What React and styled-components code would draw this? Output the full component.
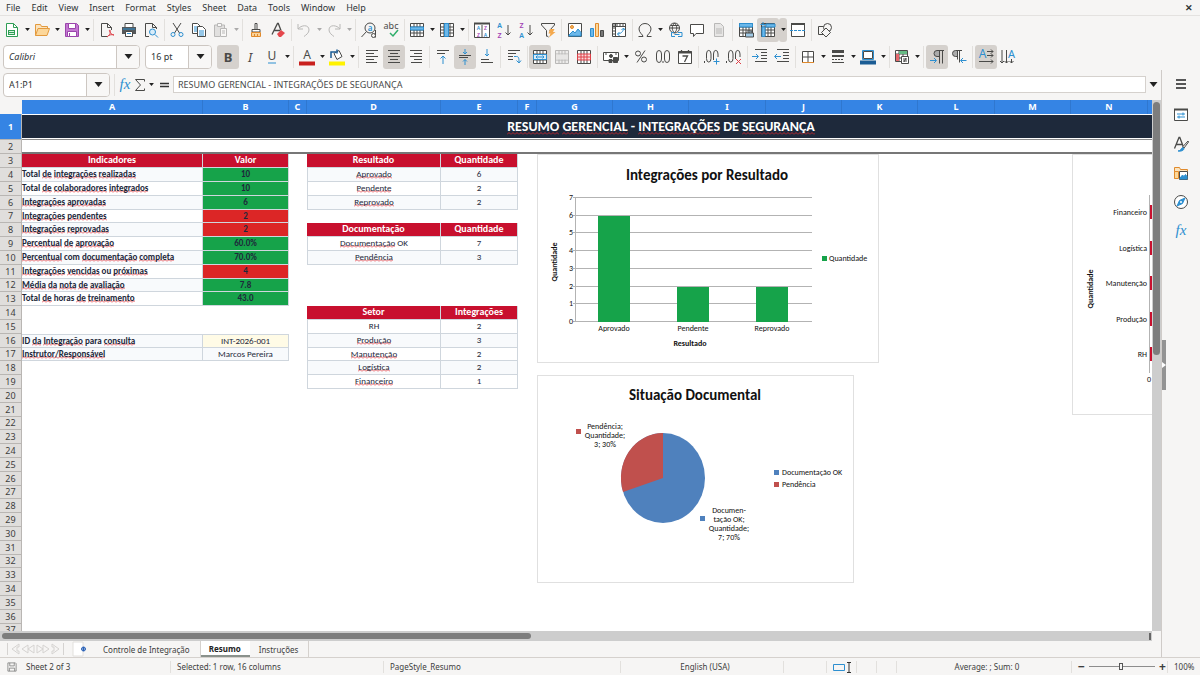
import React from "react";
import styled, { createGlobalStyle, css } from "styled-components";

const ui = `"Noto Sans", "Open Sans", sans-serif`;
const cellFont = `Carlito, Lato, sans-serif`;

const GlobalStyle = createGlobalStyle`
  * {
    box-sizing: border-box;
  }

  body {
    margin: 0;
    background: #f6f5f4;
    color: #2e3436;
    font-family: ${ui};
    font-size: 9px;
    overflow: hidden;
  }

  button,
  input {
    font: inherit;
    color: inherit;
    border: 0;
    padding: 0;
    margin: 0;
    background: none;
    outline: none;
  }

  svg {
    display: block;
    flex: none;
    overflow: visible;
  }
`;

const Window = styled.div`
  height: 100vh;
  display: flex;
  flex-direction: column;
`;

const MenuBar = styled.nav`
  display: flex;
  align-items: center;
  height: 16px;
  padding-left: 6px;
  gap: 11px;
  border-bottom: 1px solid #e4e2e0;
`;

const MenuItem = styled.button`
  line-height: 15px;
`;

const CloseButton = styled.button`
  margin: 0 7px 0 auto;
  font-size: 9px;
  font-weight: 700;
`;

const Toolbar = styled.div`
  display: flex;
  align-items: center;
  height: 27px;
  padding-left: ${(p) => p.$indent || 1}px;
`;

const ToolButton = styled.button`
  display: flex;
  align-items: center;
  justify-content: center;
  width: 22px;
  height: 24px;
  border-radius: 3px;
  background: ${(p) => (p.$on ? "#d5d1cd" : "none")};
  opacity: ${(p) => (p.$off ? 0.35 : 1)};
`;

const ArrowButton = styled(ToolButton)`
  width: 8px;
`;

const Sep = styled.span`
  width: 1px;
  height: 22px;
  margin: 0 2px;
  margin-right: ${(p) => (p.$narrow ? 1 : 2)}px;
  background: #e2e0dd;
`;

const Combo = styled.div`
  display: flex;
  height: 24px;
  width: ${(p) => p.$width}px;
  margin-right: ${(p) => (p.$tight ? 2 : 5)}px;
  border: 1px solid #cdc7c2;
  border-radius: 4px;
  background: #fff;

  input {
    flex: 1;
    min-width: 0;
    padding-left: 5px;
    font-style: ${(p) => (p.$italic ? "italic" : "normal")};
  }

  button {
    display: flex;
    align-items: center;
    justify-content: center;
    width: 23px;
    border-left: 1px solid #cdc7c2;
    border-radius: 0 3px 3px 0;
    background: #f8f7f6;
  }
`;

const Main = styled.div`
  flex: 1;
  display: flex;
  min-height: 0;
`;

const Document = styled.main`
  flex: 1;
  min-width: 0;
  display: flex;
  flex-direction: column;
  border-right: 1px solid #cfcbc8;
`;

const FormulaBar = styled.div`
  display: flex;
  align-items: center;
  height: 29px;
  margin-bottom: 1px;
  padding: 0 4px 0 3px;
`;

const FormulaButton = styled.button`
  display: flex;
  align-items: center;
  justify-content: center;
  width: ${(p) => p.$width || 15}px;
`;

const FormulaInput = styled.input`
  flex: 1;
  min-width: 0;
  height: 17px;
  margin: 0 3px 0 0;
  padding-left: 4px;
  border: 1px solid #d5d1cd;
  background: #fff;
  color: #4a4a4a;
`;

const SheetRow = styled.div`
  flex: 1;
  display: flex;
  min-height: 0;
`;

const Sheet = styled.div`
  position: relative;
  flex: 1;
  min-width: 0;
  overflow: hidden;
  background: #fff;
`;

const Grid = styled.table`
  table-layout: fixed;
  border-collapse: separate;
  border-spacing: 0;
  width: 1300px;
  font-family: ${cellFont};
  font-size: 9px;
  line-height: 12px;
  color: #1e293b;

  th,
  td {
    padding: 0;
    white-space: nowrap;
  }

  tbody tr {
    height: 14px;
  }

  tbody tr:nth-child(5n + 7) {
    height: 13px;
    line-height: 12px;
  }
`;

const Corner = styled.th`
  background: #f6f5f4;
`;

const ColHeader = styled.th`
  height: 14px;
  background: #3584e4;
  border-right: 1px solid #2f77cf;
  color: #fff;
  font-family: ${ui};
  font-size: 9px;
`;

const RowHeader = styled.th`
  background: ${(p) => (p.$on ? "#3584e4" : "#e0dedc")};
  color: ${(p) => (p.$on ? "#fff" : "#3d3d3d")};
  border-right: 1px solid #b9b6b3;
  border-bottom: 1px solid #b9b6b3;
  font-family: ${ui};
  font-size: 9px;
  font-weight: ${(p) => (p.$on ? 700 : 400)};
`;

const TitleRow = styled.tr`
  && {
    height: 26px;
  }
`;

const TitleCell = styled.td`
  background: #1e293b;
  border-top: 1px solid #fff;
  border-bottom: 1px solid #8b8b8b;
  box-shadow: inset 0 -1px #fff;
  color: #fff;
  font-size: 14px;
  font-weight: 700;
  text-align: center;
`;

const FrozenRow = styled.tr`
  td {
    border-bottom: 2px solid #777;
  }
`;

const fills = {
  head: "#c8102e",
  good: "#16a34a",
  bad: "#dc2626",
  soft: "#f8fafc",
  plain: "#ffffff",
  input: "#fffbe6",
};

const Cell = styled.td`
  text-align: center;
  vertical-align: top;
  ${(p) =>
    p.$fill &&
    css`
      background: ${fills[p.$fill]};
      border-right: 1px solid #cfd6dd;
      border-bottom: 1px solid #cfd6dd;
    `}
  ${(p) => p.$edge && "border-left: 1px solid #cfd6dd;"}
  ${(p) => p.$top && "border-top: 1px solid #cfd6dd;"}
  ${(p) =>
    p.$fill === "head" &&
    css`
      color: #fff;
      font-size: 10px;
      font-weight: 700;
    `}
  ${(p) =>
    p.$label &&
    css`
      text-align: left;
      font-weight: 700;
    `}
  ${(p) => p.$bold && "font-weight: 700;"}
`;

const wave = encodeURIComponent(
  `<svg xmlns="http://www.w3.org/2000/svg" width="4" height="3"><path d="M0 2.500L2 .5l2 2" fill="none" stroke="#e0262c" stroke-width=".8"/></svg>`
);

const Misspelt = styled.span`
  background: url("data:image/svg+xml,${wave}") repeat-x left bottom;
`;

const ChartFrame = styled.figure`
  position: absolute;
  left: ${(p) => p.$x}px;
  top: ${(p) => p.$y}px;
  margin: 0;
  border: 1px solid #e0e0e0;
  background: #fff;

  text {
    font-family: ${cellFont};
    font-size: 8px;
    fill: #111;
  }

  .title {
    font-size: 15px;
    font-weight: 700;
  }

  .axis {
    font-weight: 700;
  }
`;

const VScroll = styled.div`
  width: 9px;
  padding: 2px 1px;
  background: #cdcdcd;
`;

const VThumb = styled.div`
  height: 48%;
  border-radius: 4px;
  background: #7d7d7d;
`;

const HScroll = styled.div`
  display: flex;
  align-items: center;
  justify-content: space-between;
  height: 10px;
  margin-right: 9px;
  padding: 2px 1px 2px 2px;
  background: #cdcdcd;
`;

const HThumb = styled.div`
  width: 46%;
  height: 6px;
  border-radius: 3px;
  background: #7d7d7d;
`;

const Splitter = styled.div`
  width: 2px;
  height: 7px;
  background: #666;
`;

const TabBar = styled.div`
  display: flex;
  align-items: stretch;
  height: 16px;
  padding-left: 5px;
  font-size: 8px;
  color: #3d3d3d;
`;

const TabNav = styled.button`
  display: flex;
  align-items: center;
  justify-content: center;
  width: 15px;
`;

const AddTab = styled(TabNav)`
  width: 20px;
  margin: 0 5px 0 4px;
`;

const SheetTab = styled.button`
  padding: 0 10px 0 9px;
  border-right: 1px solid #d5d1cd;
  ${(p) =>
    p.$on &&
    css`
      padding: 0 9px 0 8px;
      background: #fff;
      border-right: 0;
      border-bottom: 2px solid #8a918c;
      color: #222;
      font-weight: 700;
    `}
`;

const Sidebar = styled.aside`
  position: relative;
  width: 38px;
  display: flex;
  flex-direction: column;
  align-items: center;
  gap: 5px;
  padding-top: 2px;
`;

const SideButton = styled(ToolButton)`
  width: 24px;

  &:first-child {
    margin-bottom: 2px;
  }
`;

const SideHandle = styled.button`
  position: absolute;
  left: 0;
  top: 46%;
  display: flex;
  align-items: center;
  width: 4px;
  height: 50px;
  background: #939393;
`;

const StatusBar = styled.footer`
  display: grid;
  grid-template-columns: 20px 150px 213px 237px 1fr 43px 30px 20px 20px 175px 96px 33px;
  align-items: center;
  height: 18px;
  border-top: 1px solid #d5d1cd;
  font-size: 8px;
  color: #3d3d3d;
`;

const StatusCell = styled.div`
  display: flex;
  align-items: center;
  justify-content: ${(p) => (p.$center ? "center" : "flex-start")};
  gap: 4px;
  height: 12px;
  padding-left: 6px;
  border-left: ${(p) => (p.$first ? 0 : 1)}px solid #e2e0dd;
  white-space: nowrap;
`;

const ZoomSlider = styled.input`
  appearance: none;
  width: 66px;
  height: 1px;
  background: #8d8d8d;

  &::-webkit-slider-thumb {
    appearance: none;
    width: 4px;
    height: 7px;
    border: 1px solid #555;
    background: #f6f5f4;
  }
`;

const ZoomButton = styled.button`
  font-size: 12px;
  line-height: 12px;
  font-weight: 700;
`;

/* ---------- icons ---------- */

const D = "#4a4a48";
const B = "#2d8fd0";

function Icon({ children, w = 16, h = 16, stroke = D }) {
  return (
    <svg width={w} height={h} viewBox={`0 0 ${w} ${h}`} fill="none" stroke={stroke}>
      {children}
    </svg>
  );
}

const Caret = ({ big }) => (
  <svg width={big ? 9 : 5} height={big ? 5 : 3} viewBox="0 0 8 5">
    <path d="M0 0h8L4 5z" fill="#222" />
  </svg>
);

// letters that belong to an icon
const Glyph = ({ x = 8, y = 12, size = 12, fill = D, font = "Noto Sans", anchor = "middle", ...rest }) => (
  <text x={x} y={y} fontSize={size} fill={fill} stroke="none" fontFamily={`"${font}", sans-serif`} textAnchor={anchor} {...rest} />
);

const gridPath = "M1.5 1.5h13v13h-13zM1.5 5h13M1.5 8h13M1.5 11h13M5 1.5v13M8 1.5v13M11 1.5v13";

const icons = {
  new: (
    <>
      <path d="M2.5 1.5h7l4 4v9h-11z" fill="#fff" stroke="#2f9e55" />
      <path d="M9.500 1.500v4h4" stroke="#2f9e55" />
      <path d="M4 8h7v5H4z" fill="#2f9e55" stroke="none" />
      <path d="M5 9.500h5M5 11.500h5" stroke="#d9f2e0" />
    </>
  ),
  open: (
    <>
      <path d="M1.500 13.500v-11h5l1 2h6v2" fill="#fbe3bd" stroke="#e39a3d" />
      <path d="M1.500 13.500L4 6.500h11.500L13 13.500z" fill="#fcd79a" stroke="#e39a3d" />
    </>
  ),
  save: (
    <>
      <path d="M1.500 1.500h11l2 2v11h-13z" fill="#c478d2" stroke="#9a45ab" />
      <path d="M4.500 1.500h7v5h-7zM3.500 9.500h9v5h-9z" fill="#fff" stroke="#9a45ab" />
      <path d="M5.500 11v3" stroke="#9a45ab" />
    </>
  ),
  pdf: (
    <>
      <path d="M8 14.500H2.500v-13h6l4 4V8M8.500 1.500v4h4" />
      <path d="M8 15c3-2 4-5 3-7-2 0 1 5 4 5-2-1-6 0-7 2z" stroke="#dd4048" />
    </>
  ),
  print: (
    <>
      <path d="M4 5V1.500h8V5" fill="#fff" />
      <path d="M1 5h14v7H1z" fill="#55585a" stroke="none" />
      <path d="M2 7h12" stroke={B} />
      <path d="M4.500 9.500h7v5h-7z" fill="#fff" />
      <path d="M6 11.500h4" stroke={B} />
    </>
  ),
  preview: (
    <>
      <path d="M6 14.500H2.500v-13h7l4 4V7M9.500 1.500v4h4" />
      <circle cx="9.500" cy="10" r="3" stroke={B} fill="#d8edfa" />
      <path d="M12 12.500l3 3" stroke={B} />
    </>
  ),
  cut: (
    <>
      <path d="M4 1l6.500 10M12 1L5.500 11" />
      <circle cx="4" cy="12.500" r="2" stroke={B} />
      <circle cx="12" cy="12.500" r="2" stroke={B} />
    </>
  ),
  copy: (
    <>
      <path d="M6 11.500H1.500v-10h5l3 3" fill="#fff" />
      <path d="M6.500 4.500h5l3 3v7h-8z" fill="#fff" />
      <path d="M3 5h3M3 7h3M3 9h3M8 9h5M8 11h5M8 13h5" stroke={B} />
    </>
  ),
  paste: (
    <>
      <path d="M7 14.500H1.500V3h10v3" fill="#bbb" />
      <path d="M4.500 1.500h4v3h-4z" fill="#fff" />
      <path d="M7.500 6.500h6v8h-6z" fill="#fff" />
      <path d="M9 9h3M9 11h3" />
    </>
  ),
  brush: (
    <>
      <path d="M7 1.500h2v6H7zM4 7.500h8v2.500H4z" fill="#fff" />
      <path d="M3.500 10.500h9v4h-9z" fill="#fbd39a" stroke="#e08a2c" />
      <path d="M6.500 14v-2M9.500 14v-2" stroke="#e08a2c" />
    </>
  ),
  clear: (
    <>
      <path d="M2 12.500L7.500 1.500h.8l2.700 7M4 8.500h6" strokeWidth="1.300" />
      <path d="M7 12l4-4 4 3-4 4H9z" fill="#e5484d" stroke="none" />
    </>
  ),
  undo: <path d="M2 2v5h5M2 7c3-4 11-5 11 1 0 3-3 5-5 6.500" />,
  redo: <path d="M14 2v5H9M14 7C11 3 3 2 3 8c0 3 3 5 5 6.500" />,
  find: (
    <>
      <circle cx="9" cy="6" r="5" />
      <path d="M5.500 9.500l-5 5.500" />
      <Glyph x={9} y={8.500} size={8} fill={B} fontWeight="600">a</Glyph>
      <path d="M14.500 8v7.500" />
      <circle cx="12.500" cy="13.500" r="2" fill="#f6f5f4" />
    </>
  ),
  spell: (
    <>
      <Glyph y={7} size={9}>abc</Glyph>
      <path d="M7 11l3 3 5-6" stroke="#2fae6a" strokeWidth="1.500" />
    </>
  ),
  rows: (
    <>
      <path d={gridPath} fill="#fff" />
      <path d="M1.500 5h13v3h-13z" fill="#6cb8ea" stroke={B} />
    </>
  ),
  cols: (
    <>
      <path d={gridPath} fill="#fff" />
      <path d="M5.500 1.500h4v13h-4z" fill="#6cb8ea" stroke={B} />
    </>
  ),
  sort: (
    <>
      <path d="M.5 1.500h15v14H.5zM8 3v12" fill="#fff" />
      <path d="M0 1.500h16" strokeWidth="2" />
      <Glyph x={4.500} y={8} size={5} fill={B} fontWeight="600">A</Glyph>
      <Glyph x={4.500} y={14.500} size={5} fill="#a33fb5" fontWeight="600">Z</Glyph>
      <Glyph x={11.500} y={8} size={5} fill="#a33fb5" fontWeight="600">Z</Glyph>
      <Glyph x={11.500} y={14.500} size={5} fill={B} fontWeight="600">A</Glyph>
    </>
  ),
  asc: (
    <>
      <Glyph x={3.500} y={6} size={7} fill={B} fontWeight="600">A</Glyph>
      <Glyph x={3.500} y={15.500} size={7} fill="#a33fb5" fontWeight="600">Z</Glyph>
      <path d="M12 3v10M9.500 10.500l2.500 2.500 2.500-2.500" />
    </>
  ),
  desc: (
    <>
      <Glyph x={3.500} y={6} size={7} fill="#a33fb5" fontWeight="600">Z</Glyph>
      <Glyph x={3.500} y={15.500} size={7} fill={B} fontWeight="600">A</Glyph>
      <path d="M12 3v10M9.500 10.500l2.500 2.500 2.500-2.500" />
    </>
  ),
  filter: (
    <>
      <path d="M6.500 14.500v-6L1.500 3V1.500h13V3l-5 5.500M6.500 13.500l2 1.500" />
      <path d="M10 7h4.500l-1.500 3h2.500L9 15.500l1.500-4H8.500z" fill="#f4a94e" stroke="none" />
    </>
  ),
  image: (
    <>
      <path d="M1.500 1.500h13v13h-13z" fill="#fff" />
      <path d="M2 13l4-4 2 2 3-4 3 3.500V14H2z" fill="#6cb8ea" stroke={B} />
      <circle cx="5" cy="5" r="1.500" fill="#f7b45c" stroke="#e08a2c" />
    </>
  ),
  chart: (
    <>
      <path d="M1.500 6.500h3v8h-3z" fill="#6cb8ea" stroke={B} />
      <path d="M6.500 1.500h3v13h-3z" fill="#fcd79a" stroke="#e08a2c" />
      <path d="M11.500 8.500h3v6h-3z" fill="#777" />
    </>
  ),
  pivot: (
    <>
      <path d="M1.500 1.500h13v13h-13zM1.500 4.500h13M4.500 1.500v13" fill="#fff" />
      <path d="M2 3h12M3 5v9" strokeDasharray="2 1" />
      <path d="M12.500 6.500c0 3-3 5.500-6 5.500M10.500 8l2-2 1.500 2M8.500 10l-2 2 2 2" stroke={B} />
    </>
  ),
  omega: <path d="M1.500 14.500H6c0-2-4-3.500-4-7.500a6 5.500 0 0 1 12 0c0 4-4 5.500-4 7.500h4.500" />,
  link: (
    <>
      <circle cx="7.500" cy="6" r="5" />
      <path d="M2.500 6h10M7.500 1c-3 3-3 7 0 10M7.500 1c3 3 3 7 0 10M3.500 3.500h8" />
      <path d="M7 10.500H4.500v4H8M11 10.500h4v4h-4M7.500 12.500h5" stroke={B} />
    </>
  ),
  comment: <path d="M1.500 2.500h13v9H7L4.500 14.500v-3h-3z" fill="#fff" />,
  page: (
    <>
      <path d="M3.500 1.500h6l3 3v10h-9z" fill="#ccc" />
      <path d="M5 7h6M5 9h6M5 11h6" />
    </>
  ),
  headers: (
    <>
      <path d={gridPath} fill="#fff" />
      <path d="M1.500 1.500h13V5h-13z" fill="#6cb8ea" stroke={B} />
      <path d="M7.500 11h8v4h-8zM9 9h5v2" fill="#9fc9e6" />
    </>
  ),
  freeze: (
    <>
      <path d={gridPath} fill="#fff" />
      <path d="M2 5h3v9.500H2zM6 2h9v3H6z" fill="#6cb8ea" stroke={B} />
      <path d="M3 0v5M.5 2.500h5" stroke={B} />
    </>
  ),
  split: (
    <>
      <path d="M1.500 2.500h13v12h-13z" fill="#fff" />
      <path d="M1 2h14" strokeWidth="2" />
      <path d="M0 8.500h16" stroke={B} strokeDasharray="3 1" />
    </>
  ),
  shapes: (
    <>
      <path d="M7 12.500H1.500v-8h5" />
      <circle cx="10.500" cy="5.500" r="4" />
      <path d="M9 6l4.500 4.500L9 15l-4.500-4.500z" fill="#f6f5f4" />
    </>
  ),
  bold: <Glyph y={13} size={13} fontWeight="700">B</Glyph>,
  italic: <Glyph y={13} size={13} font="Noto Sans" fontStyle="italic">I</Glyph>,
  underline: (
    <>
      <Glyph y={11} size={12}>U</Glyph>
      <path d="M4 14h8" stroke={B} />
    </>
  ),
  color: (
    <>
      <Glyph y={10} size={12}>A</Glyph>
      <path d="M0 14.500h16" strokeWidth="4" stroke="#c9211e" />
    </>
  ),
  fill: (
    <>
      <path d="M5 4.500l5-3 3 6L8 10.500z" fill="#fff" />
      <path d="M2 9V3h5M8 .5v4" stroke="#1b5c94" strokeWidth="1.500" />
      <path d="M0 14.500h16" strokeWidth="4" stroke="#fff200" />
    </>
  ),
  left: <path d="M2 1.500h12M2 4.500h8M2 7.500h12M2 10.500h8M2 13.500h11" />,
  center: <path d="M2 1.500h12M4 4.500h8M2 7.500h12M4 10.500h8M2 13.500h12" />,
  right: <path d="M2 1.500h12M6 4.500h8M2 7.500h12M6 10.500h8M3 13.500h11" />,
  top: (
    <>
      <path d="M2 1.500h12M2 4.500h8" />
      <path d="M8 15V7.500M5.500 9.500L8 7l2.500 2.500" stroke={B} />
    </>
  ),
  middle: (
    <>
      <path d="M2 6.500h12M2 8.500h9" />
      <path d="M8 0v4.500M6 3l2 2 2-2M8 16v-5.500M6 12.500l2-2 2 2" stroke={B} />
    </>
  ),
  bottom: (
    <>
      <path d="M2 10.500h8M2 13.500h12" />
      <path d="M8 0v7M6 5l2 2 2-2" stroke={B} />
    </>
  ),
  wrap: (
    <>
      <path d="M2 1.500h12M2 4.500h8M2 7.500h5M2 10.500h5" />
      <path d="M8 7.500h2.500c2 0 2.500 1 2.500 6M10.500 11.500l2.500 2.500 2-2.500" stroke={B} />
    </>
  ),
  merge: (
    <>
      <path d="M1.500 1.500h13v13h-13zM1.500 5h13M1.500 11h13M5 1.500V5M8 1.500V5M11 1.500V5M5 11v3.500M8 11v3.500M11 11v3.500" fill="#fff" />
      <path d="M1.500 5.500h13v5h-13zM4 8h8M5.500 6.500L4 8l1.500 1.500M10.500 6.500L12 8l-1.500 1.500" fill="#d8edfa" stroke={B} />
    </>
  ),
  mergeOff: (
    <>
      <path d={gridPath} fill="#ddd" />
      <path d="M2 5.500h12v5H2z" fill="#ccc" stroke="none" />
    </>
  ),
  unmerge: (
    <>
      <path d="M1.500 1.500h13v13h-13zM5 1.500V5M8 1.500V5M11 1.500V5M5 11v3.500M8 11v3.500M11 11v3.500" fill="#fff" />
      <path d="M1.500 5h13v6h-13zM5 5v6M8 5v6M11 5v6M1.500 8h13" fill="#fbdcdc" stroke="#dd4048" />
    </>
  ),
  currency: (
    <>
      <path d="M.5 3.500h15v8H.5z" fill="#fff" />
      <circle cx="8" cy="7" r="1.500" fill={D} />
      <path d="M6 13.500v-3h3v3zM10.500 13.500v-5h4v5z" fill={D} />
      <path d="M2 5h2M12 5h2" />
    </>
  ),
  percent: (
    <>
      <circle cx="5" cy="4.500" r="2.500" />
      <circle cx="11" cy="10.500" r="2.500" />
      <path d="M12 1.500L4 13.500" />
    </>
  ),
  number: (
    <>
      <path d="M1.500 5a2.500 3.500 0 0 1 5 0v5a2.500 3.500 0 0 1-5 0zM9.500 5a2.500 3.500 0 0 1 5 0v5a2.500 3.500 0 0 1-5 0z" />
      <path d="M8 12v2" />
    </>
  ),
  date: (
    <>
      <path d="M1.500 2.500h13v12h-13z" fill="#fff" />
      <path d="M1 3.500h14" strokeWidth="2" />
      <path d="M4.500 1v3M11.500 1v3M5.500 7h5l-3 6" strokeWidth="1.300" />
    </>
  ),
  decAdd: (
    <>
      <path d="M2.500 5a2.200 3.500 0 0 1 4.500 0v4.500a2.200 3.500 0 0 1-4.500 0zM9.500 5a2.200 3.500 0 0 1 4.500 0v3M9.500 5v6M.5 12v2" />
      <path d="M12.500 9.500v6M9.500 12.500h6" stroke={B} />
    </>
  ),
  decDel: (
    <>
      <path d="M2.500 5a2.200 3.500 0 0 1 4.500 0v4.500a2.200 3.500 0 0 1-4.500 0zM9.500 5a2.200 3.500 0 0 1 4.500 0v3M9.500 5v5M.5 12v2" />
      <path d="M10 10l5 5M15 10l-5 5" stroke="#dd4048" />
    </>
  ),
  indent: (
    <>
      <path d="M3 .5h12M9 3.500h6M9 6.500h6M9 9.500h6M3 12.500h12" />
      <path d="M0 7.500h6M4 5l2.500 2.500L4 10" stroke={B} />
    </>
  ),
  outdent: (
    <>
      <path d="M3 .5h12M9 3.500h6M9 6.500h6M9 9.500h6M3 12.500h12" />
      <path d="M7 7.500H1M3 5L.5 7.500 3 10" stroke={B} />
    </>
  ),
  borders: (
    <>
      <path d="M2.500 2.500h11v11h-11zM8 2.500v11M2.500 8h11" fill="#fff" />
      <path d="M2 13.500h12" stroke="#e08a2c" />
    </>
  ),
  lines: (
    <>
      <path d="M2 2.500h12" strokeWidth="3" />
      <path d="M2 7h12" strokeWidth="2" />
      <path d="M2 10.500h12" strokeDasharray="2 1" />
      <path d="M2 13.500h12" />
    </>
  ),
  borderColor: (
    <>
      <path d="M2.500 1.500h11v9h-11z" fill="#fff" stroke={B} />
      <path d="M3.500 2.500h9v7h-9z" />
      <path d="M0 13.500h16" strokeWidth="4" stroke="#1b5c94" />
    </>
  ),
  cond: (
    <>
      <path d="M1.500 1.500h12v11h-12zM1.500 5h12M1.500 9h12M5 1.500v11M9 1.500v11" fill="#fff" />
      <path d="M5 2h8v3H5z" fill="#66bb84" stroke="none" />
      <path d="M2 5h3v7H2z" fill="#e5686c" stroke="none" />
      <path d="M7.500 7.500h7v7h-7zM9 10h4M9 12h4M12 9l-2 4" fill="#fff" />
    </>
  ),
  ltr: (
    <>
      <path d="M10.500 1.500H8a3 3 0 0 0 0 6h2.500z" fill="#aaa" />
      <path d="M15 1.500h-5M10.500 1.500v13M13.500 1.500v13" />
      <path d="M1 11.500h6M5 9l2.500 2.500L5 14" stroke={B} />
    </>
  ),
  rtl: (
    <>
      <path d="M6.500 1.500H4.500a3 3 0 0 0 0 6h2z" fill="#aaa" />
      <path d="M11 1.500H6M6.500 1.500v9M8.500 1.500v12" />
      <path d="M15.500 11.500H10M12 9l-2.500 2.500L12 14" stroke={B} />
    </>
  ),
  textH: (
    <>
      <Glyph x={4.500} y={9} size={12} fill={B}>A</Glyph>
      <path d="M9 2.500h6M9 6.500h6M1 12.500h14M13 .5l2 2-2 2M13 4.500l2 2-2 2M13 10.500l2 2-2 2" />
    </>
  ),
  textV: (
    <>
      <Glyph x={11.500} y={9} size={11} fill={B}>A</Glyph>
      <path d="M2 1v13M6.500 1v13M11.500 10v4M0 12l2 2 2-2M4.500 12l2 2 2-2M9.500 12l2 2 2-2" />
    </>
  ),
  menu: <path d="M3 4h10M3 8h10M3 12h10" strokeWidth="1.500" stroke="#222" />,
  props: (
    <>
      <path d="M1.500 2.500h13v11h-13z" fill="#fff" />
      <path d="M1 2.500h14" strokeWidth="2" />
      <path d="M4 7h8M4 10h8M10 5.500v3M6 8.500v3" stroke={B} />
    </>
  ),
  styles: (
    <>
      <path d="M1.500 12.500L6 1.500h.8l4 10.500M3 8.500h6.500" strokeWidth="1.300" />
      <path d="M15 5l-5 5.500 1 1.500L15.500 6z" fill="#fff" />
      <path d="M5 15c3 0 3-3 5-3.500l1 1c0 2-3 3-6 2.500z" fill={B} stroke={B} />
    </>
  ),
  gallery: (
    <>
      <path d="M1.500 13.500v-11h5l1 2h7v2" fill="#fbe3bd" stroke="#e08a2c" />
      <path d="M1.500 13.500v-7h4v7z" fill="#fcd79a" stroke="#e08a2c" />
      <path d="M6.500 6.500h8v8h-8z" fill="#fff" />
      <path d="M7 13l2.500-3 1.500 1.500 1.500-2 1.500 2V14H7z" fill={B} stroke={B} />
    </>
  ),
  navigator: (
    <>
      <circle cx="8" cy="8" r="6.500" fill="#fff" />
      <path d="M12 4l-2.500 5.500L4 12l2.500-5.500z" fill={B} stroke={B} />
      <circle cx="8" cy="8" r="1" fill="#fff" stroke="none" />
    </>
  ),
  fx: <Glyph y={12} size={15} fill={B} font="Liberation Serif" fontStyle="italic">fx</Glyph>,
  sigma: <path d="M12.500 4.500v-2h-9l5 5.500-5 5.500h9v-2" />,
  equals: <path d="M4 6.500h9M4 9.500h9" strokeWidth="1.500" stroke="#333" />,
  disk: <path d="M2.500 2.500h10l1 1v10h-11zM5 2.500v4h6v-4M4.500 13.500v-4h7v4" stroke="#777" />,
  first: <path d="M2.500 2v12M14 3L7 8l7 5v-3h-2V6h2z" stroke="#d5d3d1" />,
  prev: <path d="M8 4L2 8l6 4zM14 4L8 8l6 4z" stroke="#d5d3d1" />,
  next: <path d="M8 4l6 4-6 4zM2 4l6 4-6 4z" stroke="#d5d3d1" />,
  last: <path d="M13.500 2v12M2 3l7 5-7 5v-3h2V6H2z" stroke="#d5d3d1" />,
  addSheet: (
    <>
      <path d="M2 1h10v14H2z" fill="#fff" stroke="#e2e0dd" />
      <circle cx="12.500" cy="8" r="2" stroke="#2a62b8" />
      <path d="M12.500 6v4M10.500 8h4" stroke="#2a62b8" />
    </>
  ),
};

// name, or name + flags: v = has menu, n = pressed, d = disabled; "|" and "¦" are separators
const standardBar = [
  "new v", "open v", "save v", "|", "pdf", "print", "preview", "¦", "cut", "copy", "paste vd", "|",
  "brush", "clear", "¦", "undo vd", "redo vd", "|", "find", "spell", "¦", "rows v", "cols v", "|",
  "sort", "asc", "desc", "filter", "|", "image", "chart", "pivot", "¦", "omega v", "link", "comment",
  "page d", "|", "headers", "freeze vn", "split", "|", "shapes",
];

const formatBar = [
  "bold n", "italic", "underline v", "|", "color v", "fill v", "|", "left", "center n", "right", "|",
  "top", "middle n", "bottom", "|", "wrap", "¦", "merge n", "mergeOff d", "unmerge", "|", "currency v",
  "percent", "number", "date", "|", "decAdd", "decDel", "¦", "indent", "outdent", "¦", "borders v",
  "lines v", "borderColor v", "¦", "cond v", "|", "ltr n", "rtl", "|", "textH n", "textV",
];

function Tools({ items }) {
  return items.map((item, i) => {
    if (item === "|" || item === "¦") return <Sep key={i} $narrow={item === "¦"} />;
    const [name, flags = ""] = item.split(" ");
    const on = flags.includes("n");
    const off = flags.includes("d");
    return (
      <React.Fragment key={i}>
        <ToolButton aria-label={name} $on={on} $off={off}>
          <Icon>{icons[name]}</Icon>
        </ToolButton>
        {flags.includes("v") && (
          <ArrowButton aria-label={`${name} options`} $on={on} $off={off}>
            <Caret />
          </ArrowButton>
        )}
      </React.Fragment>
    );
  });
}

/* ---------- sheet ---------- */

const columns = [
  ["A", 181], ["B", 86], ["C", 18], ["D", 134], ["E", 77], ["F", 19], ["G", 76], ["H", 76],
  ["I", 77], ["J", 76], ["K", 76], ["L", 77], ["M", 76], ["N", 77], ["O", 76], ["P", 76],
];

const cells = {};

function put(row, col, text, fill, extra) {
  cells[col + row] = { text, fill, ...extra };
}

function putTable(row, left, right, data) {
  put(row, "D", left, "head");
  put(row, "E", right, "head");
  data.forEach(([name, count], i) => {
    const r = row + 1 + i;
    const fill = r % 2 ? "plain" : "soft";
    put(r, "D", name, fill, { edge: true });
    put(r, "E", count, fill);
  });
}

put(3, "A", "Indicadores", "head");
put(3, "B", "Valor", "head");
[
  ["Total de integrações realizadas", "10", "good"],
  ["Total de colaboradores integrados", "10", "good"],
  ["Integrações aprovadas", "6", "good"],
  ["Integrações pendentes", "2", "bad"],
  ["Integrações reprovadas", "2", "bad"],
  ["Percentual de aprovação", "60.0%", "good"],
  ["Percentual com documentação completa", "70.0%", "good"],
  ["Integrações vencidas ou próximas", "4", "bad"],
  ["Média da nota de avaliação", "7.8", "good"],
  ["Total de horas de treinamento", "43.0", "good"],
].forEach(([label, value, fill], i) => {
  put(4 + i, "A", label, i % 2 ? "plain" : "soft", { label: true });
  put(4 + i, "B", value, fill, { bold: true });
});
put(16, "A", "ID da Integração para consulta", "soft", { label: true, top: true });
put(16, "B", "INT-2026-001", "input", { top: true });
put(17, "A", "Instrutor/Responsável", "soft", { label: true });
put(17, "B", "Marcos Pereira", "soft", { known: true });

putTable(3, "Resultado", "Quantidade", [["Aprovado", 6], ["Pendente", 2], ["Reprovado", 2]]);
putTable(8, "Documentação", "Quantidade", [["Documentação OK", 7], ["Pendência", 3]]);
putTable(14, "Setor", "Integrações", [
  ["RH", 2], ["Produção", 3], ["Manutenção", 2], ["Logística", 2], ["Financeiro", 1],
]);

const knownWords = ["Total", "com", "ou", "horas", "para", "ID", "OK", "RH", "DE", "-"];

function Spelled({ text }) {
  return String(text)
    .split(" ")
    .map((word, i) => (
      <React.Fragment key={i}>
        {i > 0 && " "}
        {knownWords.includes(word) || /\d/.test(word) ? word : <Misspelt>{word}</Misspelt>}
      </React.Fragment>
    ));
}

function SheetGrid() {
  const rows = Array.from({ length: 80 }, (_, i) => i + 3);
  return (
    <Grid>
      <colgroup>
        <col style={{ width: 22 }} />
        {columns.map(([name, width]) => (
          <col key={name} style={{ width }} />
        ))}
      </colgroup>
      <thead>
        <tr>
          <Corner />
          {columns.map(([name]) => (
            <ColHeader key={name} scope="col">{name}</ColHeader>
          ))}
        </tr>
      </thead>
      <tbody>
        <TitleRow>
          <RowHeader $on scope="row">1</RowHeader>
          <TitleCell colSpan={16}>
            <Spelled text="RESUMO GERENCIAL - INTEGRAÇÕES DE SEGURANÇA" />
          </TitleCell>
        </TitleRow>
        <FrozenRow>
          <RowHeader scope="row">2</RowHeader>
          <td colSpan={16} />
        </FrozenRow>
        {rows.map((r) => (
          <tr key={r}>
            <RowHeader scope="row">{r}</RowHeader>
            {columns.map(([name]) => {
              const c = cells[name + r];
              if (!c) return <Cell key={name} />;
              return (
                <Cell key={name} $fill={c.fill} $label={c.label} $bold={c.bold} $edge={c.edge} $top={c.top}>
                  {c.fill === "head" || c.known ? c.text : <Spelled text={c.text} />}
                </Cell>
              );
            })}
          </tr>
        ))}
      </tbody>
    </Grid>
  );
}

/* ---------- charts ---------- */

function ResultChart() {
  const base = 167;
  const step = 124 / 7;
  const bars = [["Aprovado", 6], ["Pendente", 2], ["Reprovado", 2]];
  return (
    <ChartFrame $x={537} $y={54}>
      <svg width="340" height="207" viewBox="0 0 340 207">
        <text className="title" x="169" y="25" textAnchor="middle">Integrações por Resultado</text>
        {[0, 1, 2, 3, 4, 5, 6, 7].map((n) => {
          const y = Math.round(base - n * step);
          return (
            <g key={n}>
              <path d={`M35 ${y - 0.5}H274`} stroke="#b3b3b3" />
              <text x="35" y={y + 2} textAnchor="end">{n}</text>
            </g>
          );
        })}
        <path d="M37.500 43v124" stroke="#b3b3b3" />
        {bars.map(([name, n], i) => (
          <g key={name}>
            <rect x={60 + i * 79} y={Math.round(base - n * step)} width="32" height={Math.round(n * step)} fill="#16a34a" />
            <text x={76 + i * 79} y="176" textAnchor="middle">{name}</text>
          </g>
        ))}
        <text className="axis" x="152" y="191" textAnchor="middle">Resultado</text>
        <text className="axis" transform="translate(19 107) rotate(-90)" textAnchor="middle">Quantidade</text>
        <rect x="284" y="101" width="5" height="5" fill="#16a34a" />
        <text x="291" y="106">Quantidade</text>
      </svg>
    </ChartFrame>
  );
}

function Lines({ x, y, lines }) {
  return (
    <text x={x} y={y} textAnchor="middle">
      {lines.map((line, i) => (
        <tspan key={i} x={x} dy={i ? 9 : 0}>{line}</tspan>
      ))}
    </text>
  );
}

function DocumentChart() {
  return (
    <ChartFrame $x={537} $y={275}>
      <svg width="315" height="206" viewBox="0 0 315 206">
        <text className="title" x="157" y="24" textAnchor="middle">Situação Documental</text>
        <ellipse cx="125" cy="102" rx="42" ry="45" fill="#4f81bd" />
        <path d="M125 102V57A42 45 0 0 0 85 116z" fill="#c0504d" />
        <rect x="38" y="53" width="5" height="5" fill="#c0504d" />
        <Lines x={67} y={53} lines={["Pendência;", "Quantidade;", "3; 30%"]} />
        <rect x="162" y="140" width="5" height="5" fill="#4f81bd" />
        <Lines x={191} y={137} lines={["Documen-", "tação OK;", "Quantidade;", "7; 70%"]} />
        <rect x="236" y="94" width="5" height="5" fill="#4f81bd" />
        <text x="244" y="99">Documentação OK</text>
        <rect x="236" y="106" width="5" height="5" fill="#c0504d" />
        <text x="244" y="111">Pendência</text>
      </svg>
    </ChartFrame>
  );
}

function SectorChart() {
  return (
    <ChartFrame $x={1072} $y={54}>
      <svg width="340" height="259" viewBox="0 0 340 259">
        {["Financeiro", "Logística", "Manutenção", "Produção", "RH"].map((name, i) => (
          <g key={name}>
            <text x="74" y={60 + Math.round(i * 35.5)} textAnchor="end">{name}</text>
            <rect x="77" y={50 + Math.round(i * 35.5)} width="100" height="14" fill="#c8102e" />
          </g>
        ))}
        <path d="M76.500 40v178" stroke="#b3b3b3" />
        <text x="76" y="227" textAnchor="middle">0</text>
        <text className="axis" transform="translate(20 134) rotate(-90)" textAnchor="middle">Quantidade</text>
      </svg>
    </ChartFrame>
  );
}

/* ---------- window ---------- */

const menus = ["File", "Edit", "View", "Insert", "Format", "Styles", "Sheet", "Data", "Tools", "Window", "Help"];

export default function App() {
  return (
    <Window>
      <GlobalStyle />
      <MenuBar>
        {menus.map((m) => (
          <MenuItem key={m}>{m}</MenuItem>
        ))}
        <CloseButton aria-label="Close document">✕</CloseButton>
      </MenuBar>
      <Toolbar>
        <Tools items={standardBar} />
      </Toolbar>
      <Toolbar $indent={3}>
        <Combo $width={137} $italic>
          <input aria-label="Font name" defaultValue="Calibri" />
          <button aria-label="Choose font"><Caret big /></button>
        </Combo>
        <Combo $width={67}>
          <input aria-label="Font size" defaultValue="16 pt" />
          <button aria-label="Choose size"><Caret big /></button>
        </Combo>
        <Tools items={formatBar} />
      </Toolbar>
      <Main>
        <Document>
          <FormulaBar>
            <Combo $width={107} $tight>
              <input aria-label="Name box" defaultValue="A1:P1" />
              <button aria-label="Choose range"><Caret big /></button>
            </Combo>
            <Sep />
            <FormulaButton aria-label="Function wizard"><Icon>{icons.fx}</Icon></FormulaButton>
            <FormulaButton aria-label="Select function"><Icon>{icons.sigma}</Icon></FormulaButton>
            <FormulaButton aria-label="Function options" $width={8}><Caret /></FormulaButton>
            <FormulaButton aria-label="Formula" $width={18}><Icon>{icons.equals}</Icon></FormulaButton>
            <FormulaInput aria-label="Cell content" defaultValue="RESUMO GERENCIAL - INTEGRAÇÕES DE SEGURANÇA" />
            <FormulaButton aria-label="Expand formula bar" $width={8}><Caret big /></FormulaButton>
          </FormulaBar>
          <SheetRow>
            <Sheet>
              <SheetGrid />
              <ResultChart />
              <DocumentChart />
              <SectorChart />
            </Sheet>
            <VScroll><VThumb /></VScroll>
          </SheetRow>
          <HScroll>
            <HThumb />
            <Splitter />
          </HScroll>
          <TabBar>
            {["first", "prev", "next", "last"].map((n) => (
              <TabNav key={n} aria-label={`${n} sheet`}><Icon>{icons[n]}</Icon></TabNav>
            ))}
            <AddTab aria-label="Add sheet"><Icon>{icons.addSheet}</Icon></AddTab>
            <SheetTab>Controle de Integração</SheetTab>
            <SheetTab $on>Resumo</SheetTab>
            <SheetTab>Instruções</SheetTab>
          </TabBar>
        </Document>
        <Sidebar>
          {["menu", "props", "styles", "gallery", "navigator", "fx"].map((n) => (
            <SideButton key={n} aria-label={n}><Icon>{icons[n]}</Icon></SideButton>
          ))}
          <SideHandle aria-label="Hide sidebar">
            <svg width="4" height="6" viewBox="0 0 4 6"><path d="M0 0l4 3-4 3z" fill="#fff" /></svg>
          </SideHandle>
        </Sidebar>
      </Main>
      <StatusBar>
        <StatusCell $first><Icon w={12} h={12}><g transform="scale(.75)">{icons.disk}</g></Icon></StatusCell>
        <StatusCell $first>Sheet 2 of 3</StatusCell>
        <StatusCell>Selected: 1 row, 16 columns</StatusCell>
        <StatusCell>PageStyle_Resumo</StatusCell>
        <StatusCell $center>English (USA)</StatusCell>
        <StatusCell />
        <StatusCell>
          <Icon w={19} h={12}>
            <path d="M.5 3.500h11v6H.5z" stroke={B} />
            <path d="M14 1.500h4M14 11.500h4M16 1.500v10" stroke="#333" />
          </Icon>
        </StatusCell>
        <StatusCell />
        <StatusCell />
        <StatusCell $center>Average: ; Sum: 0</StatusCell>
        <StatusCell>
          <ZoomButton aria-label="Zoom out">−</ZoomButton>
          <ZoomSlider type="range" aria-label="Zoom" defaultValue="49" />
          <ZoomButton aria-label="Zoom in">+</ZoomButton>
        </StatusCell>
        <StatusCell>100%</StatusCell>
      </StatusBar>
    </Window>
  );
}
